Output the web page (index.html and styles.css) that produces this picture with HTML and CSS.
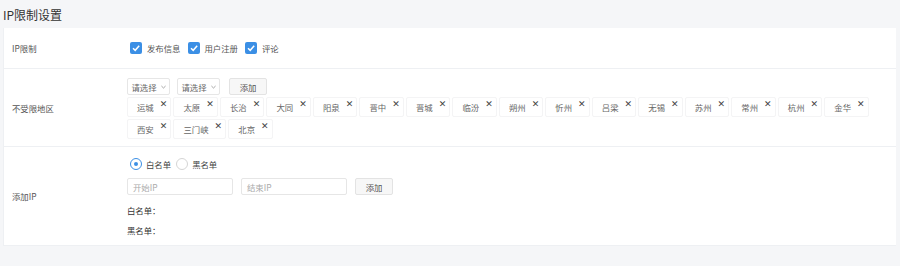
FILE: index.html
```html
<!DOCTYPE html>
<html lang="zh">
<head>
<meta charset="utf-8">
<link rel="stylesheet" href="styles.css">
</head>
<body>
<div class="panel">
  <div class="title">IP限制设置</div>
  <div class="form">
    <div class="row row-check">
      <div class="label">IP限制</div>
      <div class="content checks">
        <label class="check"><span class="box"><svg viewBox="0 0 12 12" width="12" height="12"><path d="M3 6.2 L5.2 8.3 L9.2 3.8" fill="none" stroke="#fff" stroke-width="1.5"/></svg></span>发布信息</label>
        <label class="check"><span class="box"><svg viewBox="0 0 12 12" width="12" height="12"><path d="M3 6.2 L5.2 8.3 L9.2 3.8" fill="none" stroke="#fff" stroke-width="1.5"/></svg></span>用户注册</label>
        <label class="check"><span class="box"><svg viewBox="0 0 12 12" width="12" height="12"><path d="M3 6.2 L5.2 8.3 L9.2 3.8" fill="none" stroke="#fff" stroke-width="1.5"/></svg></span>评论</label>
      </div>
    </div>
    <div class="row row-area">
      <div class="label">不受限地区</div>
      <div class="content">
        <div class="controls">
          <span class="select">请选择<svg viewBox="0 0 6 4" width="5" height="4"><path d="M0.5 0.8 L3 3.2 L5.5 0.8" fill="none" stroke="#888" stroke-width="0.9"/></svg></span>
          <span class="select">请选择<svg viewBox="0 0 6 4" width="5" height="4"><path d="M0.5 0.8 L3 3.2 L5.5 0.8" fill="none" stroke="#888" stroke-width="0.9"/></svg></span>
          <span class="btn btn-area">添加</span>
        </div>
        <div class="tags">
          <span class="tag">运城<i class="x">✕</i></span>
          <span class="tag">太原<i class="x">✕</i></span>
          <span class="tag">长治<i class="x">✕</i></span>
          <span class="tag">大同<i class="x">✕</i></span>
          <span class="tag">阳泉<i class="x">✕</i></span>
          <span class="tag">晋中<i class="x">✕</i></span>
          <span class="tag">晋城<i class="x">✕</i></span>
          <span class="tag">临汾<i class="x">✕</i></span>
          <span class="tag">朔州<i class="x">✕</i></span>
          <span class="tag">忻州<i class="x">✕</i></span>
          <span class="tag">吕梁<i class="x">✕</i></span>
          <span class="tag">无锡<i class="x">✕</i></span>
          <span class="tag">苏州<i class="x">✕</i></span>
          <span class="tag">常州<i class="x">✕</i></span>
          <span class="tag">杭州<i class="x">✕</i></span>
          <span class="tag">金华<i class="x">✕</i></span>
          <span class="tag">西安<i class="x">✕</i></span>
          <span class="tag">三门峡<i class="x">✕</i></span>
          <span class="tag">北京<i class="x">✕</i></span>
        </div>
      </div>
    </div>
    <div class="row row-ip">
      <div class="label">添加IP</div>
      <div class="content">
        <div class="radios">
          <label class="radio"><span class="dot on"></span>白名单</label>
          <label class="radio"><span class="dot"></span>黑名单</label>
        </div>
        <div class="inputs">
          <span class="input">开始IP</span>
          <span class="input">结束IP</span>
          <span class="btn btn-ip">添加</span>
        </div>
        <div class="list">白名单：</div>
        <div class="list">黑名单：</div>
      </div>
    </div>
  </div>
</div>
</body>
</html>
```

FILE: styles.css
```css
html, body {
  margin: 0;
  padding: 0;
}
body {
  background: #f5f6f8;
  font-family: "Noto Sans CJK SC", "Noto Sans", sans-serif;
  color: #555;
  font-size: 8.4px;
}
.panel {
  margin: 0 4px 0 3px;
  padding-top: 3px;
}
.title {
  height: 25px;
  line-height: 23px;
  font-size: 12px;
  color: #333;
  background: #f5f6f8;
}
.form {
  background: #fff;
  border-left: 1px solid #eef0f3;
}
.row {
  display: flex;
  align-items: center;
  border-bottom: 1px solid #eef0f3;
}
.label {
  width: 115px;
  padding-left: 8px;
  flex: none;
  color: #555;
}
.content {
  flex: 1;
}
.row-check {
  height: 40px;
}
.checks {
  display: flex;
  gap: 7px;
  padding-left: 3px;
}
.check {
  display: flex;
  align-items: center;
  gap: 5px;
}
.box {
  width: 12px;
  height: 12px;
  border-radius: 2px;
  background: #3b8fe5;
  display: block;
}
.box svg { display: block; }
.row-area {
  height: 77px;
  align-items: flex-start;
}
.row-area .label {
  align-self: center;
}
.row-area .content {
  padding-top: 9px;
}
.controls {
  display: flex;
  gap: 7px;
  height: 17px;
}
.select {
  width: 43px;
  height: 17px;
  box-sizing: border-box;
  border: 1px solid #e6e6e6;
  border-radius: 2px;
  display: flex;
  align-items: center;
  justify-content: center;
  gap: 4px;
  color: #666;
}
.btn {
  height: 17px;
  width: 38px;
  box-sizing: border-box;
  border: 1px solid #e3e3e3;
  border-radius: 2px;
  background: #f7f7f7;
  display: flex;
  align-items: center;
  justify-content: center;
  color: #555;
}
.btn-area { margin-left: 2px; }
.tags {
  display: flex;
  flex-wrap: wrap;
  gap: 2px 2.2px;
  margin-top: 2px;
  width: 760px;
}
.tag {
  height: 20px;
  box-sizing: border-box;
  border: 1px solid #f4f4f5;
  border-radius: 2px;
  padding-left: 9px;
  padding-right: 3px;
  display: flex;
  align-items: center;
  color: #666;
}
.x {
  font-style: normal;
  color: #444;
  font-size: 9px;
  margin-left: 6px;
  align-self: flex-start;
  margin-top: 1px;
  font-family: "DejaVu Sans", sans-serif;
}
.row-ip {
  height: 98px;
}
.row-ip .content {
  padding-top: 2px;
}
.radios {
  display: flex;
  gap: 5px;
  height: 20px;
  align-items: center;
  padding-left: 3px;
}
.radio {
  display: flex;
  align-items: center;
  gap: 4px;
  color: #444;
}
.dot {
  width: 12px;
  height: 12px;
  border: 1px solid #d5d5d5;
  border-radius: 50%;
  box-sizing: border-box;
  position: relative;
}
.dot.on {
  border-color: #3b8fe5;
}
.dot.on::after {
  content: "";
  position: absolute;
  left: 3px;
  top: 3px;
  width: 4px;
  height: 4px;
  border-radius: 50%;
  background: #3b8fe5;
}
.inputs {
  display: flex;
  gap: 8px;
  margin-top: 4px;
  height: 17px;
}
.input {
  width: 106px;
  height: 17px;
  box-sizing: border-box;
  border: 1px solid #e6e6e6;
  border-radius: 2px;
  padding-left: 5px;
  display: flex;
  align-items: center;
  color: #aaa;
}
.btn-ip { width: 38px; }
.list {
  height: 20px;
  line-height: 20px;
  color: #333;
}
.inputs + .list { margin-top: 5px; }
```
